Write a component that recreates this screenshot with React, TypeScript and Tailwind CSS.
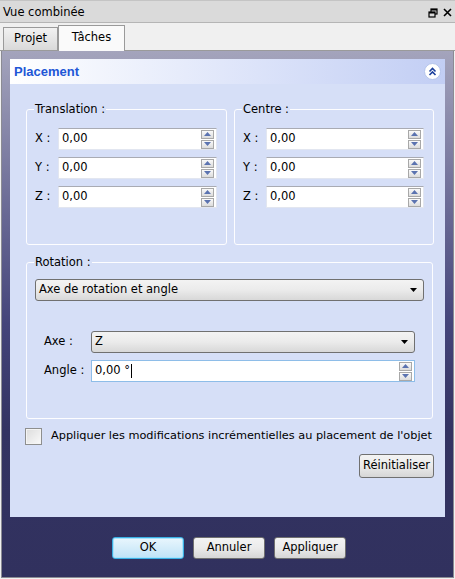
import React from 'react';

const font = { fontFamily: '"DejaVu Sans", Verdana, sans-serif' };

function SpinButtons() {
  return (
    <div className="flex flex-col gap-[1px] mr-[2px]">
      <div className="w-[13px] h-[9px] border border-[#a8a8a8] bg-gradient-to-b from-[#fafafa] to-[#dcdcdc] flex items-center justify-center">
        <svg width="7" height="4" viewBox="0 0 7 4"><path d="M3.5 0 L7 4 L0 4 Z" fill="#5b73b0" /></svg>
      </div>
      <div className="w-[13px] h-[9px] border border-[#a8a8a8] bg-gradient-to-b from-[#fafafa] to-[#dcdcdc] flex items-center justify-center">
        <svg width="7" height="4" viewBox="0 0 7 4"><path d="M0 0 L7 0 L3.5 4 Z" fill="#5b73b0" /></svg>
      </div>
    </div>
  );
}

function SpinBox({ value, focus = false }: { value: string; focus?: boolean }) {
  return (
    <div
      className={`flex-1 h-[22px] bg-white flex items-center border ${
        focus ? 'border-[#8ebde8]' : 'border-[#e2e6f0] border-t-[#a9abb3]'
      }`}
    >
      <span className="flex-1 pl-[3px] text-[11.5px] text-black flex items-center">
        {value}
        {focus && <span className="inline-block w-[1px] h-[14px] bg-black ml-[1px]" />}
      </span>
      <SpinButtons />
    </div>
  );
}

function Combo({ value, className = '' }: { value: string; className?: string }) {
  return (
    <div
      className={`h-[22px] rounded-[3px] border border-[#707070] bg-gradient-to-b from-[#f3f3f3] via-[#ebebeb] to-[#d8d8d8] flex items-center px-[3px] ${className}`}
    >
      <span className="flex-1 text-[11.5px] text-black">{value}</span>
      <svg width="7" height="4" viewBox="0 0 7 4" className="mr-[3px]"><path d="M0 0 L7 0 L3.5 4 Z" fill="#000" /></svg>
    </div>
  );
}

function XYZGroup({ title, className = '' }: { title: string; className?: string }) {
  return (
    <fieldset className={`border border-[#fdfdff] rounded-[3px] h-[143px] pl-[8px] pr-[9px] ${className}`}>
      <legend className="-ml-[1px] px-[1px] text-[11.5px] leading-[14px] text-black">{title}</legend>
      <div className="flex flex-col gap-[7px] pt-[12px]">
        {['X', 'Y', 'Z'].map((axis) => (
          <div key={axis} className="flex items-center">
            <span className="w-[23px] text-[11.5px] text-black">{axis} :</span>
            <SpinBox value="0,00" />
          </div>
        ))}
      </div>
    </fieldset>
  );
}

function Button({ label, className = '', primary = false }: { label: string; className?: string; primary?: boolean }) {
  return (
    <div
      className={`h-[22px] rounded-[3px] border flex items-center justify-center text-[11.5px] text-black ${
        primary
          ? 'border-[#3ab0e4] bg-gradient-to-b from-[#e9f6fd] to-[#bfe3f7] shadow-[inset_0_0_0_1px_#a8e2fb]'
          : 'border-[#707070] bg-gradient-to-b from-[#f3f3f3] via-[#ebebeb] to-[#d6d6d6]'
      } ${className}`}
    >
      {label}
    </div>
  );
}

export default function App() {
  return (
    <div className="w-[455px] h-[579px] bg-[#f0f0f0] flex flex-col overflow-hidden" style={font}>
      {/* title bar */}
      <div className="h-[23px] shrink-0 bg-[#dadada] border-t border-[#c4c4c4] border-b border-b-[#b5b5b5] flex items-center pl-[3px] pr-[3px] pt-[2px]">
        <span className="flex-1 text-[11.5px] text-black">Vue combinée</span>
        <svg width="10" height="10" viewBox="0 0 10 10" className="mr-[5px]">
          <rect x="3" y="1" width="6" height="5" fill="none" stroke="#000" strokeWidth="1.2" />
          <rect x="3" y="1" width="6" height="1.5" fill="#000" />
          <rect x="1" y="4" width="6" height="5" fill="#dadada" stroke="#000" strokeWidth="1.2" />
          <rect x="1" y="4" width="6" height="1.5" fill="#000" />
        </svg>
        <svg width="9" height="9" viewBox="0 0 9 9">
          <path d="M1 1 L8 8 M8 1 L1 8" stroke="#000" strokeWidth="1.6" />
        </svg>
      </div>

      {/* tabs */}
      <div className="h-[28px] shrink-0 flex items-end pl-[3px] border-b border-[#9a9a9a]">
        <div className="w-[55px] h-[23px] border border-[#9a9a9a] border-b-0 bg-gradient-to-b from-[#f2f2f2] to-[#d9d9d9] flex items-center justify-center text-[11.5px] text-black">
          Projet
        </div>
        <div className="w-[67px] h-[26px] -mb-[1px] border border-[#9a9a9a] border-b-0 bg-[#fafafa] flex items-center justify-center text-[11.5px] text-black pb-[2px]">
          Tâches
        </div>
      </div>

      {/* task panel */}
      <div className="flex-1 mx-[1px] mb-[1px] border border-[#8b8b93] border-t-0 bg-[linear-gradient(to_bottom,#a4a4bc_0%,#6e6e98_28%,#44447a_52%,#333362_72%,#31315e_100%)] flex flex-col px-[8px] pt-[8px]">
        <div className="h-[458px] flex flex-col bg-[#d6dff7]">
          <div className="h-[25px] shrink-0 bg-gradient-to-r from-white to-[#c2cef4] flex items-center pl-[4px] pr-[4px]">
            <span className="flex-1 text-[13px] font-bold text-[#2156d6]" style={{ fontFamily: '"Liberation Sans", Arial, sans-serif' }}>
              Placement
            </span>
            <div className="w-[17px] h-[17px] rounded-full bg-white border border-[#b4c4ec] flex items-center justify-center">
              <svg width="9" height="9" viewBox="0 0 9 9">
                <path d="M1.5 4.5 L4.5 1.5 L7.5 4.5 M1.5 8 L4.5 5 L7.5 8" fill="none" stroke="#1b3f9c" strokeWidth="1.6" />
              </svg>
            </div>
          </div>

          <div className="flex-1 flex flex-col pl-[16px] pr-[11px] pt-[18px]">
            <div className="flex gap-[7px]">
              <XYZGroup title="Translation :" className="w-[201px]" />
              <XYZGroup title="Centre :" className="w-[200px]" />
            </div>

            <fieldset className="mt-[10px] border border-[#fdfdff] rounded-[3px] h-[164px] w-[407px] pl-[8px] pr-[8px]">
              <legend className="-ml-[1px] px-[1px] text-[11.5px] leading-[14px] text-black">Rotation :</legend>
              <Combo value="Axe de rotation et angle" className="mt-[10px]" />
              <div className="flex flex-col gap-[7px] pt-[30px] pl-[9px] pr-[9px]">
                <div className="flex items-center">
                  <span className="w-[47px] text-[11.5px] text-black">Axe :</span>
                  <Combo value="Z" className="flex-1" />
                </div>
                <div className="flex items-center">
                  <span className="w-[47px] text-[11.5px] text-black">Angle :</span>
                  <SpinBox value="0,00 °" focus />
                </div>
              </div>
            </fieldset>

            <div className="flex items-center mt-[9px] -ml-[1px]">
              <div className="w-[17px] h-[17px] border border-[#8e8f8f] bg-gradient-to-br from-[#dcdcdc] to-[#fafafa] shadow-[inset_0_0_0_1px_#f4f4f4]" />
              <span className="ml-[9px] text-[11.3px] text-black whitespace-nowrap">
                Appliquer les modifications incrémentielles au placement de l'objet
              </span>
            </div>

            <div className="flex justify-end mt-[9px]">
              <Button label="Réinitialiser" className="w-[75px] h-[24px]" />
            </div>
          </div>
        </div>

        <div className="flex justify-center gap-[9px] mt-[20px] pl-[3px]">
          <Button label="OK" primary className="w-[72px]" />
          <Button label="Annuler" className="w-[72px]" />
          <Button label="Appliquer" className="w-[72px]" />
        </div>
      </div>
    </div>
  );
}
